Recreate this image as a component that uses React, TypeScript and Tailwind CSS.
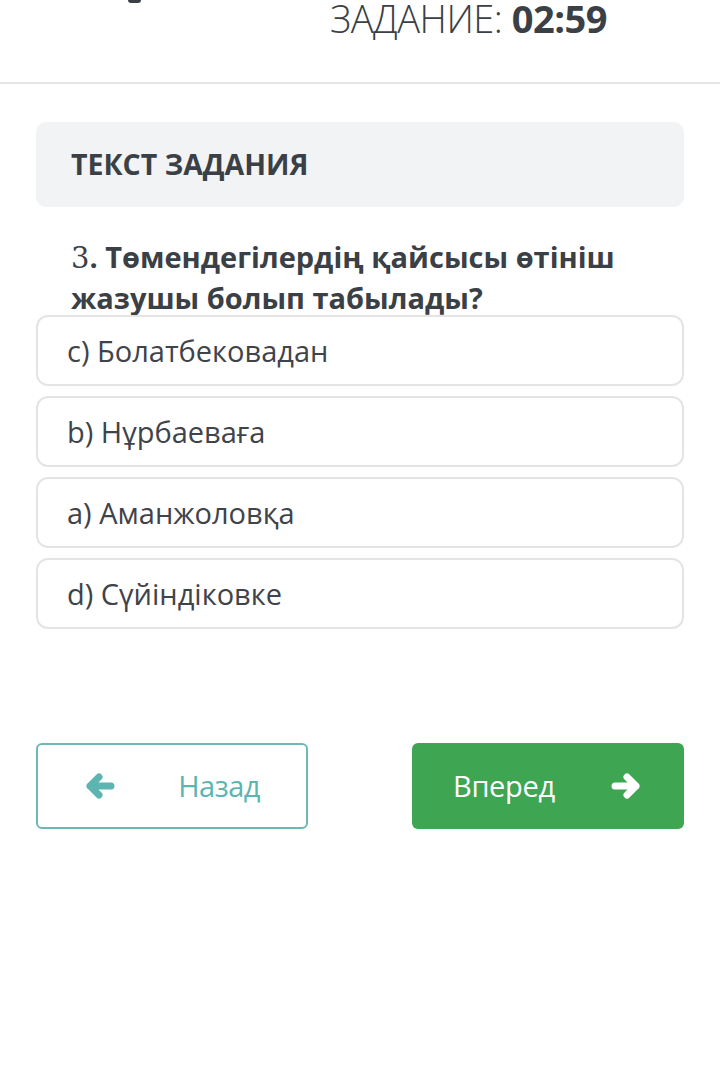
import React from 'react';

const options = [
  'c) Болатбековадан',
  'b) Нұрбаеваға',
  'a) Аманжоловқа',
  'd) Сүйіндіковке',
];

// heavy rounded arrow, pointing right; flipped for the back button
const Arrow: React.FC<{ flip?: boolean }> = ({ flip }) => (
  <svg
    viewBox="0 0 30 26"
    className={flip ? 'h-[26px] w-[30px] -scale-x-100' : 'h-[26px] w-[30px]'}
    fill="none"
    stroke="currentColor"
    strokeWidth={7}
    strokeLinecap="round"
    strokeLinejoin="round"
  >
    <path d="M4 13h21M16 4l9 9-9 9" />
  </svg>
);

const App: React.FC = () => {
  return (
    <div
      className="min-h-[1076px] w-[720px] bg-white text-[#3b3f46]"
      style={{ fontFamily: '"Open Sans", "Noto Sans", sans-serif' }}
    >
      {/* Header (cut off at the top) */}
      <header className="flex h-[84px] items-start border-b-2 border-[#e6e6e6]">
        <div className="ml-[128px] h-[3px] w-[13px] rounded-b-full bg-[#3b3f46]" />
        <div className="ml-auto mr-[113px] text-[38px] leading-[36px] tracking-[-0.5px]">
          <span className="font-light">ЗАДАНИЕ: </span>
          <span className="font-bold">02:59</span>
        </div>
      </header>

      <main className="px-9 pt-[38px]">
        {/* Task title */}
        <div className="flex h-[85px] items-center rounded-[10px] bg-[#f2f3f5] px-[35px]">
          <h2 className="text-[28.5px] font-bold uppercase">Текст задания</h2>
        </div>

        {/* Question */}
        <p className="mt-[30px] px-[35px] text-[29px] font-bold leading-[40px]">
          <span className="font-normal" style={{ fontFamily: '"DejaVu Serif", "Liberation Serif", serif' }}>
            3
          </span>
          . Төмендегілердің қайсысы өтініш жазушы болып табылады?
        </p>

        {/* Answers */}
        <div className="mt-[-3px] flex flex-col gap-[10px]">
          {options.map((o) => (
            <button
              key={o}
              className="flex h-[71px] items-center rounded-[12px] border-2 border-[#e4e4e4] bg-white px-[29px] text-left text-[29px] text-[#3f434a]"
            >
              {o}
            </button>
          ))}
        </div>

        {/* Navigation */}
        <div className="mt-[114px] grid grid-cols-2 gap-[104px]">
          <button className="flex h-[86px] items-center justify-between rounded-[6px] border-2 border-[#6bb8b6] pl-[47px] pr-[46px] text-[29px] text-[#5cb5b1]">
            <Arrow flip />
            <span className="tracking-[-0.5px]">Назад</span>
          </button>
          <button className="flex h-[86px] items-center justify-between rounded-[6px] bg-[#3ea553] pl-[41px] pr-[43px] text-[29px] text-white">
            <span className="tracking-[-0.3px]">Вперед</span>
            <Arrow />
          </button>
        </div>
      </main>
    </div>
  );
};

export default App;
